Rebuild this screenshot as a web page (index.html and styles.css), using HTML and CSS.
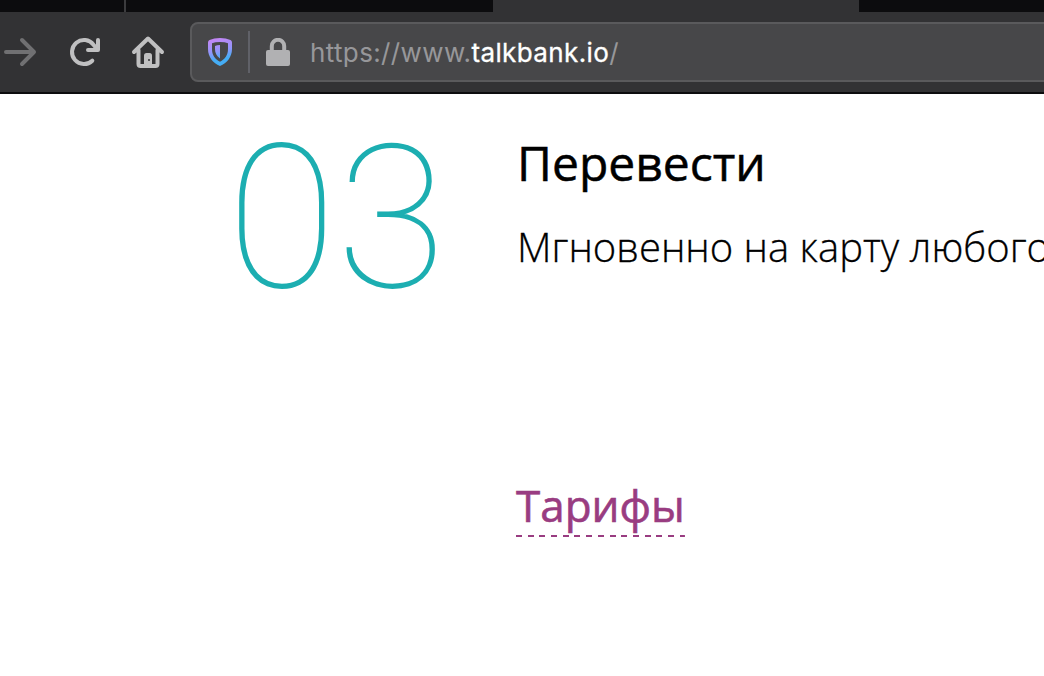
FILE: index.html
```html
<!DOCTYPE html>
<html lang="ru">

<head>
  <meta charset="utf-8">
  <title>TalkBank</title>
  <link rel="stylesheet" href="styles.css">
</head>

<body>
  <div class="tabs">
    <div class="tab tab-first"></div>
    <div class="tab tab-second"></div>
    <div class="tab tab-active"></div>
  </div>
  <div class="toolbar">
    <svg class="icon forward" viewBox="0 0 36 32" width="36" height="32">
      <path d="M3 16H31M19 4L31 16L19 28" />
    </svg>
    <svg class="icon reload" viewBox="0 0 32 32" width="32" height="32">
      <path d="M24.300 24.700A12 12 0 1 1 25.500 8.700L29 13" />
      <path d="M30 4V14H20" />
    </svg>
    <svg class="icon home" viewBox="0 0 34 34" width="34" height="34">
      <path d="M3 17L17 3.500L31 17M7.500 15V29Q7.500 31 9.500 31H24.500Q26.500 31 26.500 29V15" />
      <path d="M13 31V20.500Q13 18 15.500 18H18.500Q21 18 21 20.500V31Z" class="door" />
      <circle cx="18" cy="25" r="1" class="knob" />
    </svg>
    <div class="urlbar">
      <svg class="shield" viewBox="0 0 24 28" width="24" height="28">
        <defs>
          <linearGradient id="shield-color" x1="0.400" y1="0" x2="0.600" y2="1">
            <stop offset="0" stop-color="#c486f5" />
            <stop offset="0.450" stop-color="#9295fa" />
            <stop offset="0.750" stop-color="#45adf5" />
            <stop offset="1" stop-color="#45adf5" />
          </linearGradient>
        </defs>
        <path fill="url(#shield-color)" fill-rule="evenodd" d="M12 0Q18 0 22.500 2Q24 2.700 24 4.500V11C24 19 19 25 12 28C5 25 0 19 0 11V4.500Q0 2.700 1.500 2Q6 0 12 0ZM12 4Q7 4 4 5.200V11C4 17 7 21.300 12 23.800C17 21.300 20 17 20 11V5.200Q17 4 12 4ZM12 7V20.500C8.500 18 7 15 7 11V8Q9 7 12 7Z" />
      </svg>
      <div class="divider"></div>
      <svg class="lock" viewBox="0 0 24 28" width="24" height="28">
        <path d="M5.800 13V8A6.200 6.200 0 0 1 18.200 8V13" />
        <rect x="0" y="12" width="24" height="16" rx="2" />
      </svg>
      <div class="url">https://www.<span class="domain">talkbank.io</span>/</div>
    </div>
  </div>
  <div class="content">
    <div class="number">03</div>
    <div class="step">
      <h2 class="title">Перевести</h2>
      <p class="text">Мгновенно на карту любого</p>
      <a class="tariffs" href="#">Тарифы</a>
    </div>
  </div>
</body>

</html>
```
FILE: styles.css
```css
body {
  margin: 0;
  height: 676px;
  overflow: hidden;
  background: #fff;
  color: #000;
  font-family: "Open Sans", "Noto Sans", sans-serif;
}

.tabs {
  display: flex;
  height: 12px;
  background: #0c0c0e;
}

.tab {
  box-sizing: border-box;
}

.tab-first {
  width: 126px;
  border-right: 2px solid #3c3c3e;
}

.tab-second {
  width: 367px;
}

.tab-active {
  width: 366px;
  background: #323234;
}

.toolbar {
  box-sizing: border-box;
  display: flex;
  align-items: center;
  height: 82px;
  padding-left: 3px;
  background: #323234;
  border-bottom: 2px solid #0c0c0e;
}

.icon {
  flex: none;
  fill: none;
  stroke: #c0c0c1;
  stroke-width: 4;
  stroke-linecap: round;
  stroke-linejoin: round;
}

.forward {
  stroke: #707072;
}

.reload {
  margin-left: 29px;
}

.home {
  margin-left: 31px;
}

.door {
  fill: #c0c0c1;
  stroke: none;
}

.knob {
  fill: #323234;
  stroke: none;
}

.urlbar {
  box-sizing: border-box;
  flex: none;
  display: flex;
  align-items: center;
  width: 870px;
  height: 60px;
  margin-left: 25px;
  padding-left: 16px;
  background: #474749;
  border: 2px solid #5a5a5c;
  border-radius: 8px;
}

.divider {
  width: 2px;
  height: 42px;
  margin: 0 16px;
  background: #606168;
}

.lock {
  fill: #b1b1b3;
}

.lock path {
  fill: none;
  stroke: #b1b1b3;
  stroke-width: 4;
}

.url {
  margin-left: 20px;
  padding-top: 2px;
  color: #97979a;
  font: 26px/56px Inter, sans-serif;
  letter-spacing: 0.37px;
  white-space: nowrap;
}

.domain {
  color: #fff;
  -webkit-text-stroke: 0.3px #fff;
}

.content {
  display: flex;
}

.number {
  flex: none;
  width: 289px;
  padding-left: 227px;
  color: #1caeb1;
  font: 150 200px/249px Roboto, sans-serif;
}

.step {
  padding-top: 35px;
  white-space: nowrap;
}

.title {
  margin: 0;
  padding-left: 1px;
  font-size: 48px;
  font-weight: 500;
  line-height: 68px;
  -webkit-text-stroke: 0.5px #000;
}

.text {
  margin: 20px 0 0;
  padding-left: 1px;
  font-size: 40px;
  font-weight: 300;
  line-height: 60px;
  -webkit-text-stroke: 0.3px #000;
}

.tariffs {
  display: inline-block;
  margin-top: 199px;
  padding-bottom: 3px;
  color: #993c81;
  background: repeating-linear-gradient(to right, #993c81 0 6px, transparent 6px 11.700px) bottom / 100% 2px no-repeat;
  font-size: 44px;
  font-weight: 500;
  line-height: 58px;
  text-decoration: none;
  -webkit-text-stroke: 0.6px #993c81;
}
```
